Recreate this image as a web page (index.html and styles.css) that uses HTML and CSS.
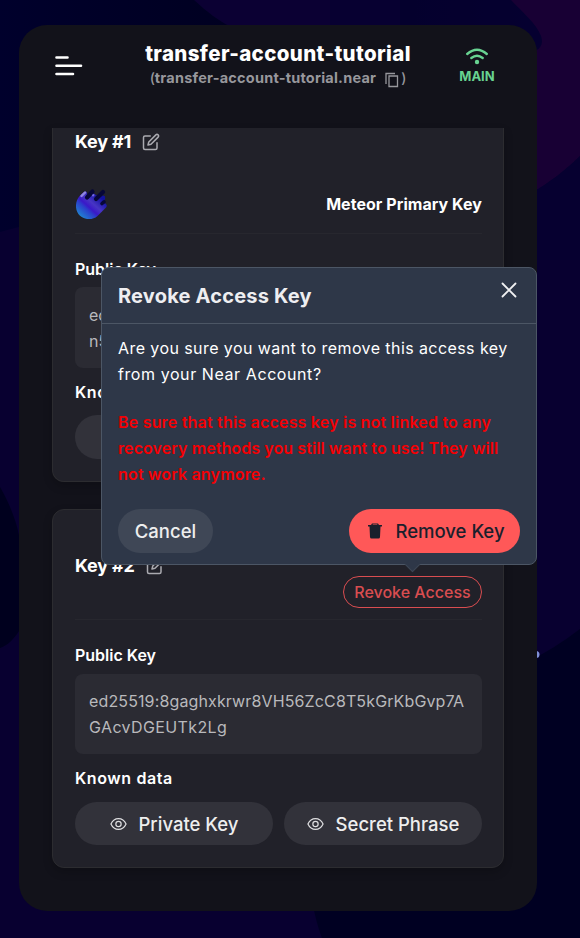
FILE: index.html
```html
<!DOCTYPE html>
<html lang="en">
<head>
<meta charset="utf-8">
<title>Account keys</title>
<link rel="stylesheet" href="styles.css">
</head>
<body>
<svg class="backdrop" viewBox="0 0 580 938" aria-hidden="true">
  <defs>
    <linearGradient id="sky" x1="0" y1="0" x2="1" y2="0"><stop offset="0" stop-color="#00002c"/><stop offset=".5" stop-color="#00001e"/><stop offset="1" stop-color="#070033"/></linearGradient>
  </defs>
  <rect width="580" height="938" fill="#080030"/>
  <path d="M0 0H580V150H19V227L0 232Z" fill="url(#sky)"/>
  <path d="M194 0C208 13 218 20 229 26H400V0Z" fill="#0b0033"/>
  <path d="M330 0H520L560 60V150H330Z" fill="#060030" opacity=".7"/>
  <path d="M511 0C522 12 536 23 541 36C544 45 540 50 530 53V194C549 183 566 170 580 156V0Z" fill="#180034"/>
  <path d="M580 156C566 170 549 183 530 194V260H580Z" fill="#060030"/>
  <path d="M0 487C9 503 15 517 19 535V631C14 639 8 645 0 648Z" fill="#00001e"/>
  <path d="M580 629C561 643 548 652 530 660V900H312C315 917 319 930 322 938H580Z" fill="#000022"/>
  <circle cx="536" cy="654.500" r="3.500" fill="#8090d8"/>
</svg>
<main class="panel">
  <header class="topbar">
    <svg class="menu" viewBox="0 0 28 22" stroke="#fff" stroke-width="2.600" stroke-linecap="round"><path d="M1.500 2.500H12.500M1.500 10.800H26M1.500 19H18"/></svg>
    <div class="account">
      <div class="name"><span>transfer-account-tutorial</span></div>
      <div class="address">(<b>transfer-account-tutorial.near</b><svg class="copy" viewBox="0 0 15 16" fill="none" stroke="currentColor" stroke-width="1.300"><path d="M1 12V1.500H10M4 4H12.500V14.500H4Z"/></svg>)</div>
    </div>
    <div class="network">
      <svg viewBox="0 0 24 17" fill="none" stroke="#68d391" stroke-width="2.400" stroke-linecap="round"><path d="M2.200 6Q12-2.500 21.800 6M6.300 10Q12 5.500 17.700 10"/><circle cx="12" cy="14" r="2.200" fill="#68d391" stroke="none"/></svg>
      <span>MAIN</span>
    </div>
  </header>
  <div class="list">
    <section class="card first">
      <h2><span>Key #1</span><svg class="edit" viewBox="0 0 24 24"><path d="M11 4H4a2 2 0 0 0-2 2v14a2 2 0 0 0 2 2h14a2 2 0 0 0 2-2v-7"/><path d="M18.500 2.500a2.120 2.120 0 0 1 3 3L12 15l-4 1 1-4Z"/></svg></h2>
      <div class="provider">
        <svg viewBox="0 0 32 31"><defs><linearGradient id="comet" x1=".1" y1=".9" x2=".8" y2=".2"><stop offset="0" stop-color="#2088d0"/><stop offset=".35" stop-color="#2b40cc"/><stop offset=".47" stop-color="#3a18c8"/><stop offset=".65" stop-color="#4735c4"/><stop offset="1" stop-color="#1010a0"/></linearGradient></defs>
          <path d="M9 3C11 1.500 12.500 3 12 5L18 4L21 6L27 6.500C31 6 31 10 28.500 12.500L31 15C32.500 16.500 31.500 18 30.500 19L22.500 27C16 33 4 30 1.500 21C0 14 2 8 9 3Z" fill="url(#comet)"/>
          <path d="M12 8.500L17.500 2.500M21 10L28 3" stroke="#070738" stroke-width="4.200" stroke-linecap="round"/><path d="M27 14.500L29 12.800" stroke="#070738" stroke-width="3.600" stroke-linecap="round"/><path d="M26 9.500L29.500 7.500" stroke="#1212a0" stroke-width="2"/><path d="M6.500 7L10 3.500" stroke="#8f86e0" stroke-width="2.400" stroke-linecap="round"/><path d="M18 6.500L18.500 6" stroke="#7468e0" stroke-width="2" stroke-linecap="round"/></svg>
        <strong><span>Meteor Primary Key</span></strong>
      </div>
      <h3><span class="t-public">Public Key</span></h3>
      <div class="value"><span>ed25519:</span><br><span>n5</span></div>
      <h3 class="known"><span class="t-known">Known data</span></h3>
      <div class="actions">
        <button><svg class="eye" viewBox="0 0 18 14"><path d="M1 7C4.500-.7 13.500-.7 17 7C13.500 14.700 4.500 14.700 1 7Z"/><circle cx="9" cy="7" r="2.800"/></svg></button>
      </div>
    </section>
    <section class="card second">
      <h2><span>Key #2</span><svg class="edit" viewBox="0 0 24 24"><path d="M11 4H4a2 2 0 0 0-2 2v14a2 2 0 0 0 2 2h14a2 2 0 0 0 2-2v-7"/><path d="M18.500 2.500a2.120 2.120 0 0 1 3 3L12 15l-4 1 1-4Z"/></svg></h2>
      <div class="revoke-row"><button class="revoke"><span>Revoke Access</span></button></div>
      <h3><span class="t-public">Public Key</span></h3>
      <div class="value"><span class="v1">ed25519:8gaghxkrwr8VH56ZcC8T5kGrKbGvp7A</span><br><span class="v2">GAcvDGEUTk2Lg</span></div>
      <h3 class="known"><span class="t-known">Known data</span></h3>
      <div class="actions">
        <button><svg class="eye" viewBox="0 0 18 14"><path d="M1 7C4.500-.7 13.500-.7 17 7C13.500 14.700 4.500 14.700 1 7Z"/><circle cx="9" cy="7" r="2.800"/></svg><span class="t-private">Private Key</span></button>
        <button><svg class="eye" viewBox="0 0 18 14"><path d="M1 7C4.500-.7 13.500-.7 17 7C13.500 14.700 4.500 14.700 1 7Z"/><circle cx="9" cy="7" r="2.800"/></svg><span class="t-secret">Secret Phrase</span></button>
      </div>
    </section>
  </div>
</main>
<div class="popover" role="dialog">
  <div class="pop-head"><span>Revoke Access Key</span><svg viewBox="0 0 16 16" stroke="#f0f0f2" stroke-width="1.800" stroke-linecap="round"><path d="M1.500 1.500L14.500 14.500M14.500 1.500L1.500 14.500"/></svg></div>
  <div class="pop-body">
    <p><span class="p1">Are you sure you want to remove this access key</span><br><span class="p2">from your Near Account?</span></p>
    <p class="warn"><span class="w1">Be sure that this access key is not linked to any</span><br><span class="w2">recovery methods you still want to use! They will</span><br><span class="w3">not work anymore.</span></p>
  </div>
  <div class="pop-actions">
    <button class="cancel"><span>Cancel</span></button>
    <button class="remove"><svg viewBox="0 0 14 16" fill="#1a202c"><path fill-rule="evenodd" d="M3 2L4 .5H10L11 2H14V3.500H0V2ZM4.500 2H9.500L9 1.400H5ZM1.500 3.500H12.500L12 14Q11.900 15.500 10.500 15.500H3.500Q2.100 15.500 2 14Z"/></svg><span>Remove Key</span></button>
  </div>
  <i class="arrow"></i>
</div>
</body>
</html>
```
FILE: styles.css
```css
* { box-sizing: border-box; }
body { margin: 0; width: 580px; height: 938px; overflow: hidden; position: relative; background: #080030; color: #fff; font: 500 16px/26px Inter, "Noto Sans", sans-serif; }
svg { display: block; flex: none; overflow: visible; }
span, b { white-space: nowrap; }
button { font: inherit; color: #eee; border: 0; display: flex; align-items: center; justify-content: center; padding: 0; }
h2, h3, p { margin: 0; }
.backdrop { position: absolute; inset: 0; width: 580px; height: 938px; }
.panel { position: relative; margin: 25px 0 0 19px; width: 518px; height: 886px; border-radius: 28px; background: #12121a; overflow: hidden; display: flow-root; }
.topbar { height: 103px; display: grid; grid-template-columns: 120px 1fr 120px; }
.menu { width: 28px; height: 22px; margin: 29.500px 0 0 35.500px; }
.account { display: flex; flex-direction: column; align-items: center; padding-top: 16px; }
.name { font-size: 20.500px; font-weight: 800; line-height: 26px; letter-spacing: .36px; }
.address { display: flex; align-items: center; color: #97979c; font-size: 14px; line-height: 22px; }
.address b { font-size: 14.500px; letter-spacing: .22px; }
.copy { width: 15px; height: 16px; margin: 3px 1px 0 9px; }
.network { display: flex; flex-direction: column; align-items: center; color: #68d391; font-size: 13px; font-weight: 700; line-height: 16px; padding: 23px 0 0; }
.network svg { width: 24px; height: 17px; margin-bottom: 3px; }
.list { padding: 0 33px; }
.card { width: 452px; border: 1px solid #2c2c30; border-radius: 12px; background: #212129; padding: 0 21px 0 22px; box-shadow: 0 4px 10px #0003; }
.first { height: 354px; border-top: 0; border-radius: 0 0 12px 12px; margin-bottom: 27px; }
.second { height: 359px; padding-top: 42px; }
h2 { height: 28px; display: flex; align-items: center; gap: 11px; font-size: 18px; font-weight: 700; letter-spacing: -.2px; }
.edit { width: 18px; height: 18px; fill: none; stroke: #aaaab0; stroke-width: 2; stroke-linejoin: round; stroke-linecap: round; }
.provider { height: 78px; padding-top: 33px; border-bottom: 1px solid #27272e; display: flex; justify-content: space-between; margin-bottom: 22px; }
.provider svg { width: 32px; height: 31px; }
.provider strong { font-size: 16px; line-height: 30px; font-weight: 700; letter-spacing: .05px; }
h3 { height: 26px; font-size: 16px; font-weight: 600; line-height: 26px; }
.value { height: 80px; margin-top: 5px; padding: 14px; border-radius: 8px; background: #2b2b33; color: #b9b9bc; font-weight: 400; }
.first .value { height: 81px; padding-top: 14.500px; }
.v1 { letter-spacing: .13px; }
.v2 { letter-spacing: .38px; }
.known { margin: 12px 0 10px; }
.first .known { margin-top: 11px; }
.t-known { letter-spacing: .6px; }
.second .value { margin-top: 6px; }
.second .known { margin: 11px 0 11px; }
.actions { display: grid; grid-template-columns: 1fr 1fr; gap: 11px; }
.actions button { height: 43.500px; border-radius: 22px; background: #32323a; font-size: 18.500px; gap: 12px; }
.second .actions button { height: 43px; }
.eye { width: 17px; height: 14px; fill: none; stroke: #dedee0; stroke-width: 1.300; }
.revoke-row { height: 44px; margin: -4px 0 22px; border-bottom: 1px solid #27272e; display: flex; justify-content: flex-end; }
.revoke { width: 139px; height: 32px; border: 1px solid #d94d50; border-radius: 16px; background: none; color: #d94d50; }
.popover { position: absolute; left: 101px; top: 267px; width: 436px; height: 298px; border: 1px solid #4c5665; border-radius: 8px; background: #2e3748; }
.pop-head { height: 56px; padding: 0 19px 0 16px; display: flex; align-items: center; justify-content: space-between; border-bottom: 1px solid #4c5665; color: #eeeef1; font-size: 20px; font-weight: 700; letter-spacing: .2px; }
.pop-head svg { width: 16px; height: 16px; margin-top: -12px; }
.pop-body { padding: 11px 16px 0; font-weight: 400; }
.p1 { letter-spacing: .42px; }
.p2 { letter-spacing: .58px; }
.warn { margin-top: 22px; color: #f40004; font-weight: 600; }
.w1 { letter-spacing: .2px; }
.w2 { letter-spacing: .09px; }
.w3 { letter-spacing: .18px; }
.pop-actions { display: flex; justify-content: space-between; margin: 22px 16px 0; font-size: 18.500px; }
.cancel { width: 95px; height: 44px; border-radius: 22px; background: #3f4756; }
.remove { width: 171px; height: 44px; border-radius: 22px; background: #ff5858; color: #1a202c; gap: 13px; padding-left: 4px; }
.remove svg { width: 14px; height: 16px; }
.arrow { position: absolute; left: 305px; top: 291px; width: 11px; height: 11px; transform: rotate(45deg); background: #2e3748; border: solid #3d4655; border-width: 0 1px 1px 0; }
```
